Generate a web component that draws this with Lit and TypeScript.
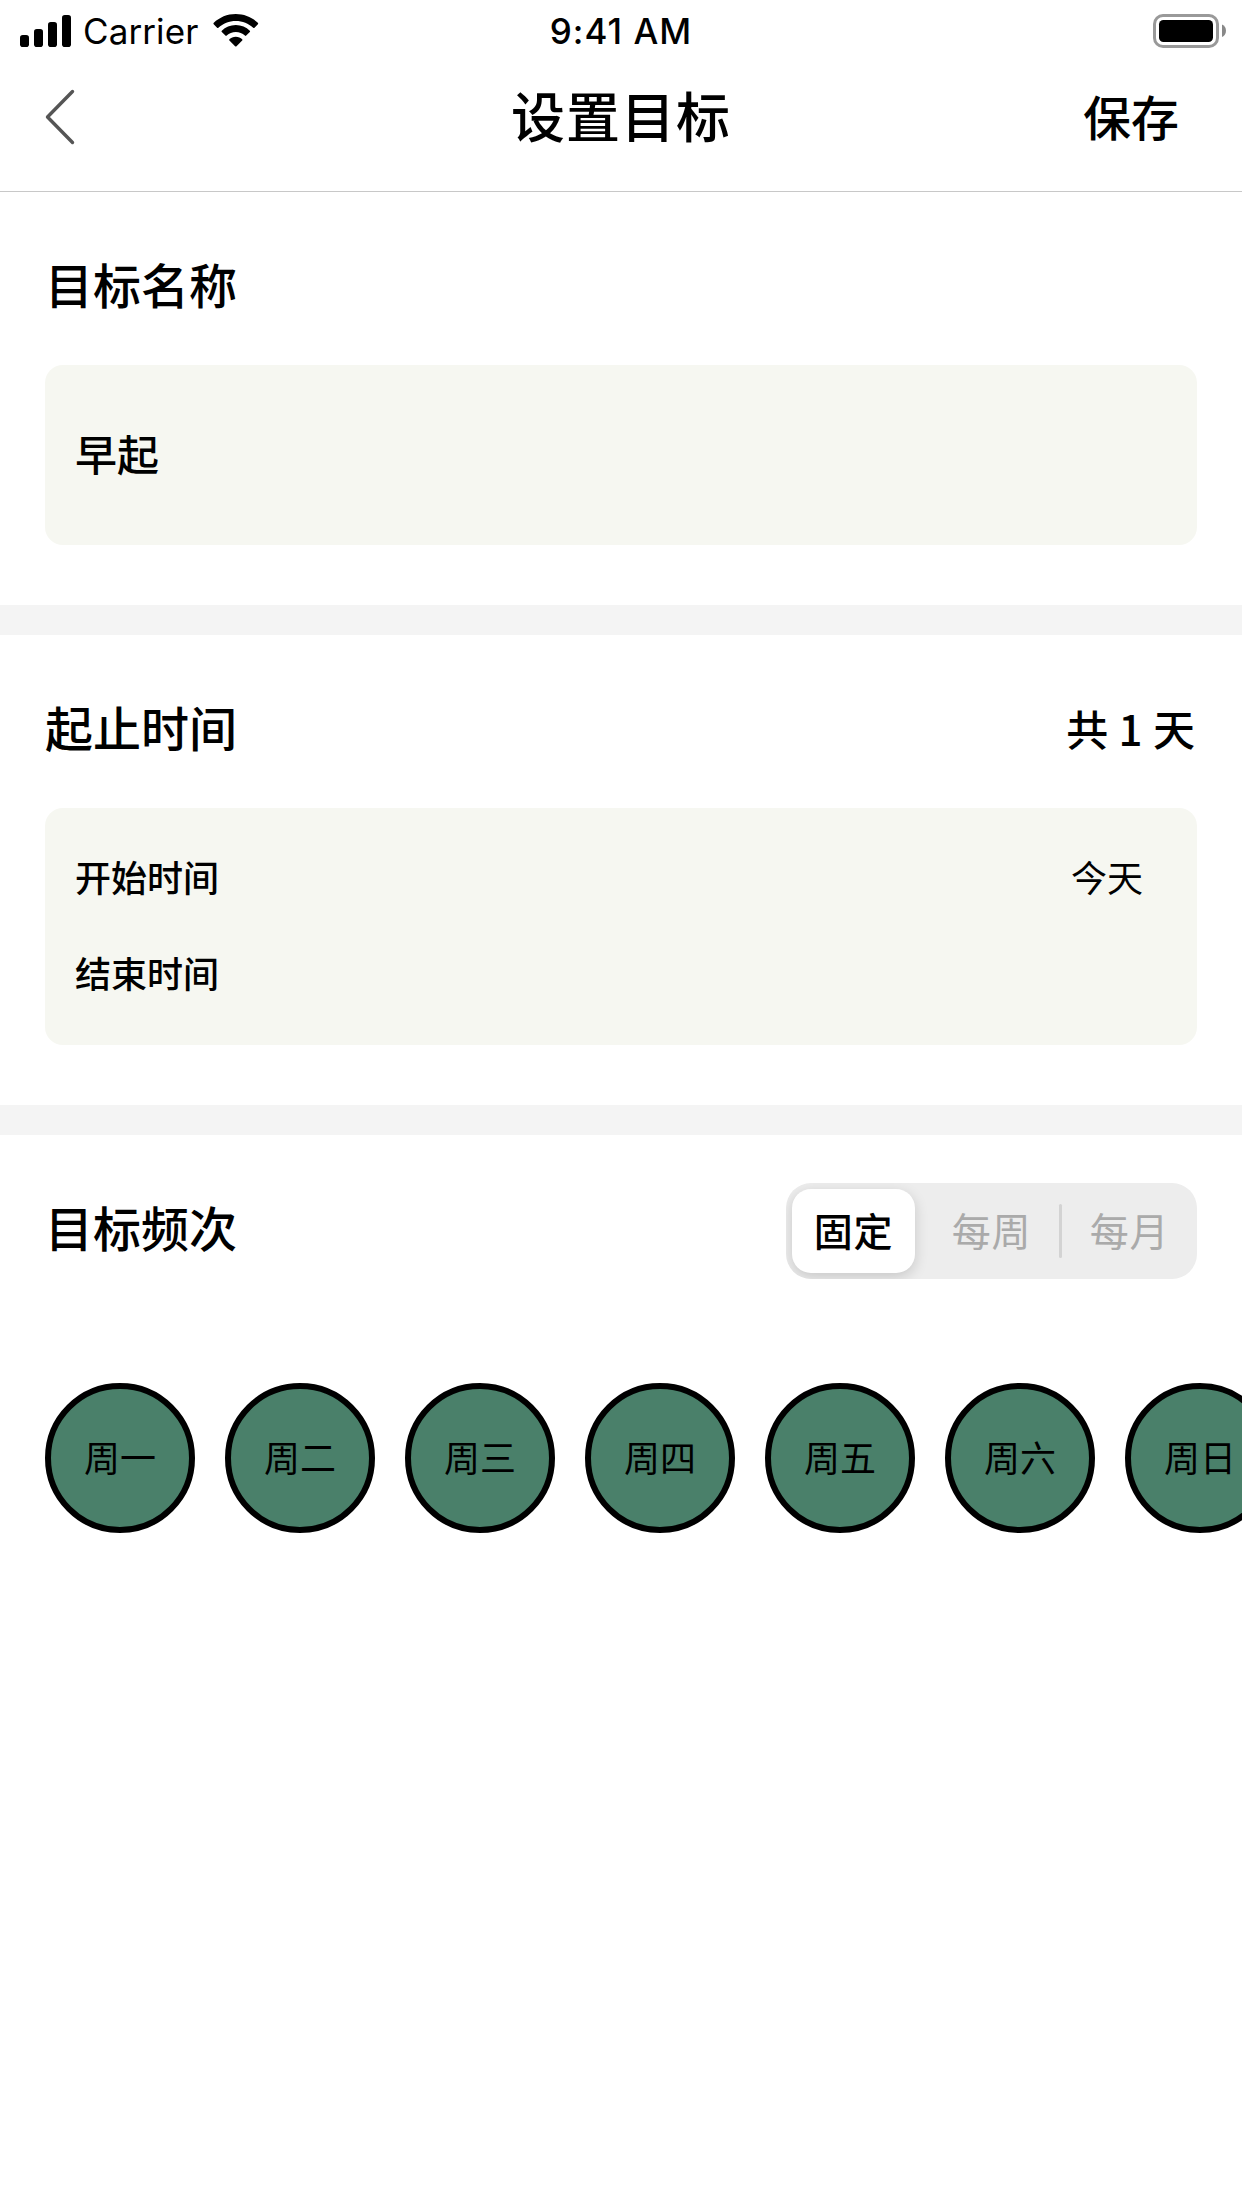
import { LitElement, html, css } from "lit";
import { customElement, property, state } from "lit/decorators.js";
import { classMap } from "lit/directives/class-map.js";

@customElement("status-bar")
class StatusBar extends LitElement {
  static styles = css`
    :host {
      display: grid;
      grid-template-columns: 1fr auto 1fr;
      align-items: center;
      height: 60px;
      font-family: Inter, "Liberation Sans", sans-serif;
      font-size: 35px;
      line-height: 60px;
      color: #000;
    }
    .left {
      display: flex;
      align-items: center;
      padding-left: 20px;
    }
    .carrier {
      width: 116px;
      margin: 1px 14px 0 12px;
      letter-spacing: 0.1px;
    }
    .time {
      font-weight: 500;
      letter-spacing: 1px;
    }
    .right {
      display: flex;
      justify-content: flex-end;
      padding-right: 16px;
    }
    svg {
      display: block;
    }
  `;

  render() {
    return html`
      <div class="left">
        <svg width="51" height="60" viewBox="0 0 51 60">
          <rect x="0" y="34" width="9" height="12" rx="2.8" />
          <rect x="14" y="28" width="9" height="18" rx="2.8" />
          <rect x="28" y="21" width="9" height="25" rx="2.8" />
          <rect x="42" y="14" width="9" height="32" rx="2.8" />
        </svg>
        <span class="carrier">Carrier</span>
        <svg width="46" height="60" viewBox="0 0 46 60">
          <path
            d="M22 13C30.600 13 38.400 16.400 44 21.800Q44.800 22.600 44.100 23.300L40.700 26.800Q40.100 27.400 39.400 26.800C34.800 22.600 28.700 20 22 20S9.200 22.600 4.600 26.800Q3.900 27.400 3.300 26.800L-.1 23.300Q-.8 22.600 0 21.800C5.600 16.400 13.400 13 22 13Z"
            transform="translate(.8 0)"
          />
          <path
            d="M22.800 24C28.400 24 33.200 26.200 36.800 29.700Q37.500 30.400 36.800 31.100L33.200 34.600Q32.600 35.200 31.900 34.600C29.400 32.300 26.400 31 22.800 31S16.200 32.300 13.700 34.600Q13 35.200 12.400 34.600L8.800 31.100Q8.100 30.400 8.800 29.700C12.400 26.200 17.200 24 22.800 24Z"
          />
          <path
            d="M22.800 35.700C25.400 35.700 27.600 36.700 29.200 38.200Q29.800 38.900 29.200 39.500L23.500 45.200Q22.800 45.900 22.100 45.200L16.400 39.500Q15.800 38.900 16.400 38.200C18 36.700 20.200 35.700 22.800 35.700Z"
          />
        </svg>
      </div>
      <div class="time">9:41 AM</div>
      <div class="right">
        <svg width="73" height="60" viewBox="0 0 73 60">
          <rect x="1.500" y="14.500" width="63" height="31" rx="8.500" fill="none" stroke="#999" stroke-width="3" />
          <rect x="6" y="19" width="54" height="22" rx="4.500" />
          <path d="M69 23.500C71.600 24.700 73 27.100 73 29.800S71.600 34.900 69 36Z" fill="#888" />
        </svg>
      </div>
    `;
  }
}

@customElement("nav-bar")
class NavBar extends LitElement {
  @property() heading = "";
  @property() action = "";

  static styles = css`
    :host {
      box-sizing: border-box;
      display: grid;
      grid-template-columns: 1fr auto 1fr;
      align-items: center;
      height: 132px;
      padding: 0 63px 18px 45px;
      border-bottom: 1px solid #c8c8c8;
      color: #000;
    }
    .back {
      display: flex;
    }
    .title {
      font-size: 54px;
      font-weight: 500;
      line-height: 80px;
      letter-spacing: 1px;
      padding: 0 0 3px 18px;
    }
    .save {
      justify-self: end;
      font-size: 48px;
      font-weight: 500;
      line-height: 80px;
      padding-bottom: 4px;
    }
  `;

  render() {
    return html`
      <div class="back">
        <svg width="30" height="56" viewBox="0 0 30 56">
          <path d="M27.500 2.500L2.500 28L27.500 53.500" fill="none" stroke="#555" stroke-width="3.400" stroke-linecap="round" stroke-linejoin="round" />
        </svg>
      </div>
      <div class="title">${this.heading}</div>
      <div class="save">${this.action}</div>
    `;
  }
}

@customElement("segmented-control")
class SegmentedControl extends LitElement {
  @property({ attribute: false }) options: string[] = [];
  @state() private selected = 0;

  static styles = css`
    :host {
      box-sizing: border-box;
      display: flex;
      width: 411px;
      height: 96px;
      padding: 6px;
      border-radius: 25px;
      background: #ededed;
      overflow: hidden;
      font-size: 39px;
    }
    .option {
      display: flex;
      justify-content: center;
      width: 123px;
      height: 84px;
      border-radius: 19px;
      color: #aaa;
      line-height: 80px;
      letter-spacing: 0.8px;
    }
    .option.on {
      background: #fff;
      color: #000;
      font-weight: 500;
      box-shadow: 0 4px 14px rgba(0, 0, 0, 0.16);
    }
    .gap {
      display: flex;
      align-items: center;
      justify-content: center;
      width: 15px;
    }
    .line {
      width: 3px;
      height: 54px;
      border-radius: 2px;
      background: #d3d3d3;
    }
  `;

  render() {
    return this.options.map(
      (label, i) => html`
        ${i > 0
          ? html`<div class="gap">
              ${i - 1 !== this.selected && i !== this.selected ? html`<div class="line"></div>` : ""}
            </div>`
          : ""}
        <div class=${classMap({ option: true, on: i === this.selected })} @click=${() => (this.selected = i)}>
          ${label}
        </div>
      `
    );
  }
}

@customElement("app-root")
class AppRoot extends LitElement {
  private days = ["周一", "周二", "周三", "周四", "周五", "周六", "周日"];

  static styles = css`
    :host {
      display: flex;
      flex-direction: column;
      height: 2208px;
      overflow: hidden;
      background: #fff;
      color: #000;
      font-family: "Noto Sans CJK SC", sans-serif;
    }
    section {
      padding: 0 45px;
    }
    .divided {
      padding-bottom: 60px;
      border-bottom: 30px solid #f4f4f4;
    }
    .head {
      box-sizing: border-box;
      display: flex;
      justify-content: space-between;
      height: 173px;
      padding-top: 48px;
    }
    .label {
      font-size: 48px;
      font-weight: 500;
      line-height: 86px;
    }
    .total {
      font-size: 42px;
      font-weight: 500;
      line-height: 90px;
      word-spacing: 1px;
      padding-right: 2px;
    }
    .card {
      box-sizing: border-box;
      border-radius: 18px;
      background: #f6f7f1;
      padding: 0 54px 0 30px;
    }
    .name {
      height: 180px;
      font-size: 42px;
      font-weight: 500;
      line-height: 176px;
    }
    .period {
      height: 237px;
      padding-top: 20px;
      font-size: 36px;
    }
    .row {
      display: flex;
      justify-content: space-between;
      height: 96px;
      line-height: 96px;
    }
    .key {
      font-weight: 500;
    }
    .days {
      display: flex;
      gap: 30px;
      padding-top: 75px;
    }
    .day {
      box-sizing: border-box;
      flex: none;
      width: 150px;
      height: 150px;
      border: 6px solid #000;
      border-radius: 50%;
      background: #4a806a;
      font-size: 36px;
      line-height: 134px;
      text-align: center;
    }
  `;

  render() {
    return html`
      <status-bar></status-bar>
      <nav-bar heading="设置目标" action="保存"></nav-bar>
      <section class="divided">
        <div class="head"><div class="label">目标名称</div></div>
        <div class="card name">早起</div>
      </section>
      <section class="divided">
        <div class="head">
          <div class="label">起止时间</div>
          <div class="total">共 1 天</div>
        </div>
        <div class="card period">
          <div class="row"><span class="key">开始时间</span><span>今天</span></div>
          <div class="row"><span class="key">结束时间</span></div>
        </div>
      </section>
      <section>
        <div class="head">
          <div class="label">目标频次</div>
          <segmented-control .options=${["固定", "每周", "每月"]}></segmented-control>
        </div>
        <div class="days">${this.days.map((day) => html`<div class="day">${day}</div>`)}</div>
      </section>
    `;
  }
}
